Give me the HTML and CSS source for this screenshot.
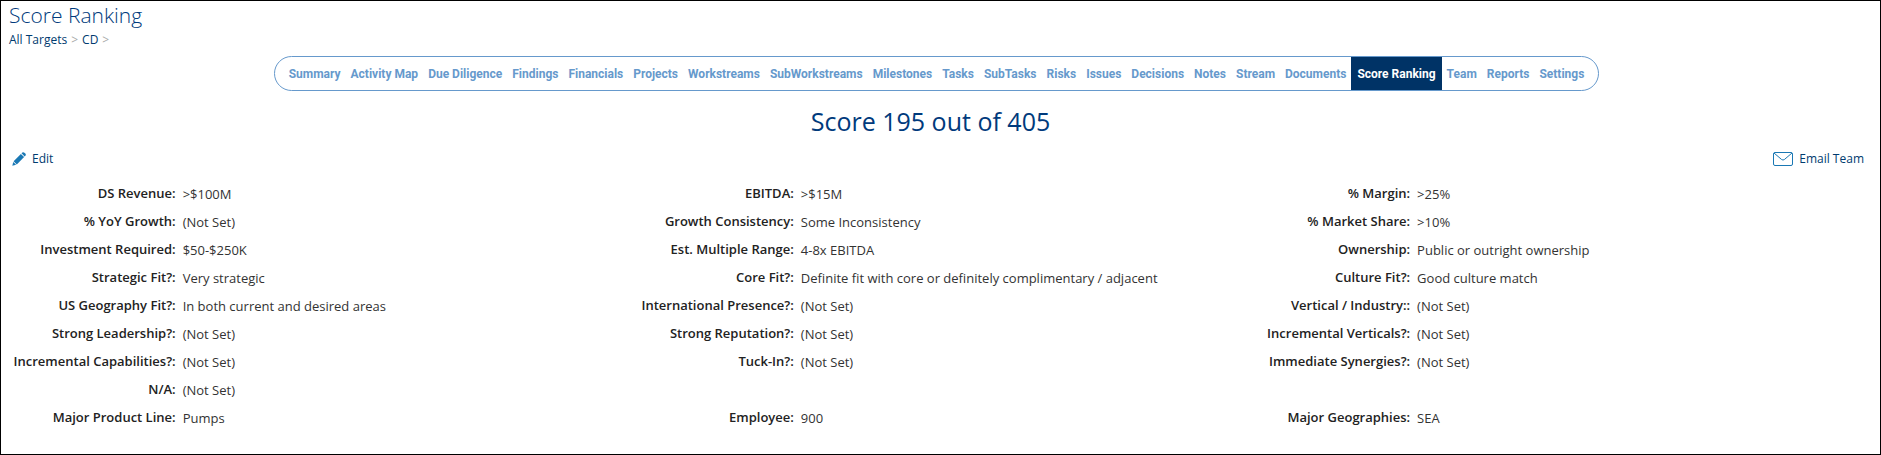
FILE: index.html
```
<!doctype html>
<html lang="en">
    <head>
        <meta charset="UTF-8" />
        <meta name="viewport" content="width=device-width, initial-scale=1.0" />
        <title>Score Ranking</title>
        <link rel="stylesheet" href="styles.css">
    </head>
    <body>
        <header class="page-header">
            <h1>Score Ranking</h1>
            <div class="breadcrumb">
                <a href="#">All Targets</a>
                <span>&gt;</span>
                <a href="#">CD</a>
                <span>&gt;</span>
            </div>
        </header>

        <div class="tabs-container">
            <nav class="tabs">
                <a href="#">Summary</a>
                <a href="#">Activity Map</a>
                <a href="#">Due Diligence</a>
                <a href="#">Findings</a>
                <a href="#">Financials</a>
                <a href="#">Projects</a>
                <a href="#">Workstreams</a>
                <a href="#">SubWorkstreams</a>
                <a href="#">Milestones</a>
                <a href="#">Tasks</a>
                <a href="#">SubTasks</a>
                <a href="#">Risks</a>
                <a href="#">Issues</a>
                <a href="#">Decisions</a>
                <a href="#">Notes</a>
                <a href="#">Stream</a>
                <a href="#">Documents</a>
                <a href="#" class="active">Score Ranking</a>
                <a href="#">Team</a>
                <a href="#">Reports</a>
                <a href="#">Settings</a>
            </nav>
        </div>

        <h2 class="score">Score 195 out of 405</h2>

        <div class="actions">
            <a href="#">
                <svg width="14" height="14" viewBox="0 0 14 14" fill="#1a78b4">
                    <path d="M0.3 13.7 L1.3 9.9 L4.1 12.7 Z" />
                    <path d="M1.6 9.2 L8.9 1.9 L12.1 5.1 L4.8 12.4 Z" />
                    <path d="M9.5 1.3 L10.4 0.5 Q11.4 -0.2 12.4 0.7 L13.3 1.6 Q14.2 2.6 13.5 3.6 L12.7 4.5 Z" />
                </svg>
                Edit
            </a>
            <a href="#">
                <svg width="20" height="14" viewBox="0 0 20 14" fill="none" stroke="#1a78b4">
                    <rect x="0.5" y="0.5" width="19" height="13" rx="1.5" />
                    <path d="M1 1 L8.6 7.5 Q10 8.6 11.4 7.5 L19 1" />
                </svg>
                Email Team
            </a>
        </div>

        <table class="details">
            <colgroup>
                <col class="label-col" />
                <col class="value-col" />
                <col class="label-col" />
                <col class="value-col-middle" />
                <col class="label-col" />
                <col />
            </colgroup>
            <tr>
                <th>DS Revenue:</th>
                <td>&gt;$100M</td>
                <th>EBITDA:</th>
                <td>&gt;$15M</td>
                <th>% Margin:</th>
                <td>&gt;25%</td>
            </tr>
            <tr>
                <th>% YoY Growth:</th>
                <td>(Not Set)</td>
                <th>Growth Consistency:</th>
                <td>Some Inconsistency</td>
                <th>% Market Share:</th>
                <td>&gt;10%</td>
            </tr>
            <tr>
                <th>Investment Required:</th>
                <td>$50-$250K</td>
                <th>Est. Multiple Range:</th>
                <td>4-8x EBITDA</td>
                <th>Ownership:</th>
                <td>Public or outright ownership</td>
            </tr>
            <tr>
                <th>Strategic Fit?:</th>
                <td>Very strategic</td>
                <th>Core Fit?:</th>
                <td>Definite fit with core or definitely complimentary / adjacent</td>
                <th>Culture Fit?:</th>
                <td>Good culture match</td>
            </tr>
            <tr>
                <th>US Geography Fit?:</th>
                <td>In both current and desired areas</td>
                <th>International Presence?:</th>
                <td>(Not Set)</td>
                <th>Vertical / Industry::</th>
                <td>(Not Set)</td>
            </tr>
            <tr>
                <th>Strong Leadership?:</th>
                <td>(Not Set)</td>
                <th>Strong Reputation?:</th>
                <td>(Not Set)</td>
                <th>Incremental Verticals?:</th>
                <td>(Not Set)</td>
            </tr>
            <tr>
                <th>Incremental Capabilities?:</th>
                <td>(Not Set)</td>
                <th>Tuck-In?:</th>
                <td>(Not Set)</td>
                <th>Immediate Synergies?:</th>
                <td>(Not Set)</td>
            </tr>
            <tr>
                <th>N/A:</th>
                <td>(Not Set)</td>
                <td colspan="4"></td>
            </tr>
            <tr>
                <th>Major Product Line:</th>
                <td>Pumps</td>
                <th>Employee:</th>
                <td>900</td>
                <th>Major Geographies:</th>
                <td>SEA</td>
            </tr>
        </table>
    </body>
</html>
```

FILE: styles.css
```
* {
    box-sizing: border-box;
}

body {
    margin: 0;
    min-height: 100vh;
    border: 1px solid black;
    background-color: white;
    color: #333;
    font-family: "Open Sans", "Noto Sans", sans-serif;
    font-size: 13px;
}

a {
    color: #003b6f;
    text-decoration: none;
}

.page-header {
    padding: 0 8px;
}

h1 {
    margin: 0;
    color: #003a7c;
    font-size: 21px;
    font-weight: 300;
    line-height: 29px;
}

.breadcrumb {
    display: flex;
    gap: 4px;
    font-size: 12px;
    line-height: 20px;
}

.breadcrumb span {
    color: #aaa;
}

.tabs-container {
    display: flex;
    justify-content: center;
    padding: 6px 8px 0 0;
}

.tabs {
    display: flex;
    height: 35px;
    padding: 0 9px;
    border: 1px solid #6699cc;
    border-radius: 18px;
    font-family: Roboto, sans-serif;
    font-size: 12px;
    font-weight: bold;
    line-height: 33px;
}

.tabs a {
    padding: 1px 5px 0;
    color: #6699cc;
}

.tabs .active {
    padding: 1px 6px 0;
    background-color: #003366;
    color: white;
}

.score {
    margin: 12px 20px 0 0;
    color: #003a7c;
    font-size: 25px;
    font-weight: normal;
    line-height: 36px;
    text-align: center;
}

.actions {
    display: flex;
    justify-content: space-between;
    padding: 10px 16px 0 11px;
    font-size: 12px;
    line-height: 20px;
}

.actions a {
    display: flex;
    align-items: center;
    gap: 6px;
}

.details {
    width: 100%;
    margin-top: 10px;
    border-collapse: collapse;
    table-layout: fixed;
}

.label-col {
    width: 9.4%;
}

.value-col {
    width: 23.5%;
}

.value-col-middle {
    width: 23.4%;
}

.details th,
.details td {
    height: 28px;
    padding: 0;
    line-height: 20px;
    white-space: nowrap;
}

.details th {
    padding-right: 2px;
    color: #222;
    font-weight: 600;
    text-align: right;
}

.details td {
    padding: 2px 0 0 5px;
    text-align: left;
}
```
